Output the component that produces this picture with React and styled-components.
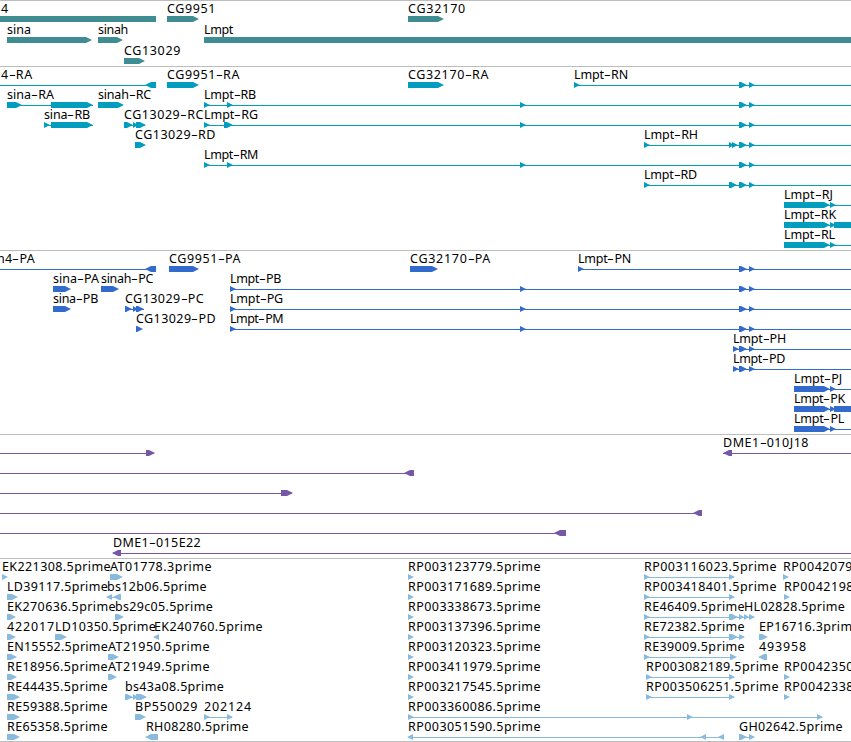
import React from "react";
import styled, { createGlobalStyle } from "styled-components";

const FONT = '12.5px "Noto Sans", "DejaVu Sans", sans-serif';
const VIEW_WIDTH = 851;
const DASH_WIDTH = 7;

// boxes: [start, end, strand], strand 1 = forward, -1 = reverse, 0 = runs past the head
// labels: [text, start, end]
const SHARED_EXONS = [
	[739, 747, 1],
	[749, 755, 1],
];
const LMPT_EXONS = [[520, 526, 1], ...SHARED_EXONS];

const genes = [
	{
		labels: [["4", 1, 9], ["CG9951", 167, 216], ["CG32170", 408, 466]],
		boxes: [[0, 156, 0], [167, 199, 1], [408, 444, 1]],
	},
	{
		labels: [["sina", 7, 31], ["sinah", 98, 128], ["Lmpt", 204, 233]],
		boxes: [[7, 92, 1], [98, 123, 1], [204, 851, 0]],
	},
	{ labels: [["CG13029", 124, 181]], boxes: [[124, 145, 1]] },
];

const transcripts = [
	{
		labels: [["4-RA", 1, 33], ["CG9951-RA", 167, 240], ["CG32170-RA", 408, 489], ["Lmpt-RN", 574, 628]],
		lines: [[0, 156], [574, 851]],
		boxes: [[145, 156, -1], [167, 199, 1], [408, 444, 1], [574, 580, 1], ...SHARED_EXONS],
	},
	{
		labels: [["sina-RA", 7, 54], ["sinah-RC", 98, 151], ["Lmpt-RB", 204, 256]],
		lines: [[7, 93], [204, 851]],
		boxes: [[7, 22, 1], [51, 93, 1], [98, 124, 1], [204, 210, 1], [227, 233, 1], ...LMPT_EXONS],
	},
	{
		labels: [["sina-RB", 44, 90], ["CG13029-RC", 124, 204], ["Lmpt-RG", 204, 258]],
		lines: [[44, 93], [124, 145], [204, 851]],
		boxes: [[44, 50, 1], [51, 93, 1], [124, 133, 1], [133, 138, 1], [136, 146, 1], [204, 210, 1], [224, 233, 1], ...LMPT_EXONS],
	},
	{
		labels: [["CG13029-RD", 135, 216], ["Lmpt-RH", 644, 698]],
		lines: [[644, 851]],
		boxes: [[135, 146, 1], [644, 650, 1], [729, 734, 1], [732, 738, 1], ...SHARED_EXONS],
	},
	{
		labels: [["Lmpt-RM", 204, 258]],
		lines: [[204, 851]],
		boxes: [[204, 210, 1], [227, 233, 1], ...LMPT_EXONS],
	},
	{
		labels: [["Lmpt-RD", 644, 697]],
		lines: [[644, 851]],
		boxes: [[644, 650, 1], [729, 737, 1], ...SHARED_EXONS],
	},
	{
		labels: [["Lmpt-RJ", 784, 833]],
		lines: [[784, 851]],
		boxes: [[784, 830, 1], [830, 836, 1]],
	},
	{
		labels: [["Lmpt-RK", 784, 836]],
		lines: [[784, 851]],
		boxes: [[784, 830, 1], [830, 836, 1], [834, 851, 0]],
	},
	{
		labels: [["Lmpt-RL", 784, 835]],
		lines: [[784, 851]],
		boxes: [[784, 830, 1], [830, 836, 1]],
	},
];

const proteins = [
	{
		labels: [["n4-PA", -3, 35], ["CG9951-PA", 169, 241], ["CG32170-PA", 410, 491], ["Lmpt-PN", 578, 631]],
		lines: [[0, 156], [578, 851]],
		boxes: [[145, 156, -1], [169, 199, 1], [410, 438, 1], [578, 584, 1], ...SHARED_EXONS],
	},
	{
		labels: [["sina-PA", 53, 99], ["sinah-PC", 101, 153], ["Lmpt-PB", 230, 281]],
		lines: [[230, 851]],
		boxes: [[53, 71, 1], [101, 119, 1], [230, 236, 1], ...LMPT_EXONS],
	},
	{
		labels: [["sina-PB", 53, 98], ["CG13029-PC", 125, 204], ["Lmpt-PG", 230, 283]],
		lines: [[125, 144], [230, 851]],
		boxes: [[53, 71, 1], [125, 132, 1], [133, 138, 1], [136, 144, 1], [230, 236, 1], ...LMPT_EXONS],
	},
	{
		labels: [["CG13029-PD", 136, 216], ["Lmpt-PM", 230, 283]],
		lines: [[230, 851]],
		boxes: [[136, 143, 1], [230, 236, 1], ...LMPT_EXONS],
	},
	{
		labels: [["Lmpt-PH", 733, 786]],
		lines: [[733, 851]],
		boxes: [[733, 739, 1], ...SHARED_EXONS],
	},
	{
		labels: [["Lmpt-PD", 733, 785]],
		lines: [[733, 851]],
		boxes: [[733, 739, 1], ...SHARED_EXONS],
	},
	{
		labels: [["Lmpt-PJ", 794, 842]],
		lines: [[794, 851]],
		boxes: [[794, 830, 1], [830, 836, 1]],
	},
	{
		labels: [["Lmpt-PK", 794, 845]],
		lines: [[794, 851]],
		boxes: [[794, 830, 1], [830, 836, 1], [834, 851, 0]],
	},
	{
		labels: [["Lmpt-PL", 794, 844]],
		lines: [[794, 851]],
		boxes: [[794, 830, 1], [830, 836, 1]],
	},
];

const clones = [
	{
		labels: [["DME1-010J18", 723, 809]],
		lines: [[0, 154], [723, 851]],
		boxes: [[146, 155, 1], [723, 732, -1]],
	},
	{ lines: [[0, 414]], boxes: [[404, 414, -1]] },
	{ lines: [[0, 292]], boxes: [[281, 293, 1]] },
	{ lines: [[0, 702]], boxes: [[693, 702, -1]] },
	{ lines: [[0, 566]], boxes: [[554, 566, -1]] },
	{
		labels: [["DME1-015E22", 113, 201]],
		lines: [[113, 851]],
		boxes: [[112, 121, -1]],
	},
];

const ests = [
	{
		labels: [["EK221308.5prime", 2, 111], ["AT01778.3prime", 110, 212], ["RP003123779.5prime", 408, 541], ["RP003116023.5prime", 644, 777], ["RP0042079", 783, 853]],
		lines: [[644, 734]],
		boxes: [[2, 8, 1], [110, 123, 1], [408, 414, 1], [644, 650, 1], [729, 735, 1], [783, 789, 1]],
	},
	{
		labels: [["LD39117.5prime", 7, 108], ["bs12b06.5prime", 107, 207], ["RP003171689.5prime", 408, 541], ["RP003418401.5prime", 644, 777], ["RP0042198", 784, 854]],
		lines: [[107, 121], [644, 734]],
		boxes: [[7, 18, 1], [106, 112, -1], [113, 121, -1], [408, 414, 1], [644, 650, 1], [729, 735, 1], [784, 790, 1]],
	},
	{
		labels: [["EK270636.5prime", 7, 116], ["bs29c05.5prime", 115, 213], ["RP003338673.5prime", 408, 541], ["RE46409.5prime", 644, 745], ["HL02828.5prime", 744, 845]],
		lines: [[644, 754]],
		boxes: [[7, 16, 1], [115, 124, 1], [408, 414, 1], [644, 650, 1], [729, 738, 1], [739, 744, 1], [744, 749, 1], [749, 755, 1]],
	},
	{
		labels: [["422017", 7, 55], ["LD10350.5prime", 55, 156], ["EK240760.5prime", 154, 263], ["RP003137396.5prime", 408, 541], ["RE72382.5prime", 644, 745], ["EP16716.3prime", 759, 860]],
		lines: [[644, 744]],
		boxes: [[7, 16, 1], [55, 67, 1], [153, 159, -1], [408, 414, 1], [644, 650, 1], [729, 738, 1], [739, 745, 1], [759, 768, 1]],
	},
	{
		labels: [["EN15552.5prime", 7, 108], ["AT21950.5prime", 108, 210], ["RP003120323.5prime", 408, 541], ["RE39009.5prime", 644, 745], ["493958", 759, 807]],
		lines: [[644, 735]],
		boxes: [[7, 17, 1], [108, 119, 1], [408, 414, 1], [644, 650, 1], [730, 737, 1], [758, 767, -1]],
	},
	{
		labels: [["RE18956.5prime", 7, 108], ["AT21949.5prime", 108, 210], ["RP003411979.5prime", 408, 541], ["RP003082189.5prime", 646, 779], ["RP0042350", 784, 854]],
		lines: [[646, 734]],
		boxes: [[7, 17, 1], [108, 117, 1], [408, 414, 1], [646, 652, 1], [729, 735, 1], [784, 790, 1]],
	},
	{
		labels: [["RE44435.5prime", 7, 108], ["bs43a08.5prime", 125, 224], ["RP003217545.5prime", 408, 541], ["RP003506251.5prime", 646, 779], ["RP0042338", 784, 854]],
		lines: [[125, 146], [646, 734]],
		boxes: [[7, 20, 1], [125, 133, 1], [133, 138, 1], [136, 147, 1], [408, 414, 1], [646, 652, 1], [729, 735, 1], [784, 790, 1]],
	},
	{
		labels: [["RE59388.5prime", 7, 108], ["BP550029", 135, 198], ["202124", 204, 252], ["RP003360086.5prime", 408, 541]],
		lines: [[204, 232], [408, 822]],
		boxes: [[7, 20, 1], [135, 146, 1], [204, 210, 1], [227, 233, 1], [408, 414, 1], [687, 693, 1], [817, 823, 1]],
	},
	{
		labels: [["RE65358.5prime", 7, 108], ["RH08280.5prime", 146, 249], ["RP003051590.5prime", 408, 541], ["GH02642.5prime", 739, 843]],
		lines: [[408, 724], [739, 754]],
		boxes: [[7, 20, 1], [145, 158, -1], [407, 413, -1], [700, 706, -1], [718, 724, -1], [739, 747, 1], [749, 755, 1]],
	},
];

const tracks = [
	{ name: "genes", color: "#3f8d93", rowHeight: 21, height: 65, rows: genes },
	{ name: "transcripts", color: "#009dbf", rowHeight: 20, height: 183, rows: transcripts },
	{ name: "proteins", color: "#326bcb", rowHeight: 20, height: 183, rows: proteins },
	{ name: "clones", color: "#7557a6", rowHeight: 20, height: 123, rows: clones },
	{ name: "ests", color: "#88bbdd", rowHeight: 20, height: 182, rows: ests },
];

const ruler = document.createElement("canvas").getContext("2d");

// spread the letters so that a label covers its span, the dash keeps its own width
function tracking(text, width) {
	const letters = text.replace("-", "");
	const dash = letters === text ? 0 : DASH_WIDTH;
	ruler.font = FONT;
	return (width - dash - ruler.measureText(letters).width) / letters.length;
}

function boxPoints([start, end, strand]) {
	const head = Math.min(6, end - start);
	if (strand === 1) {
		return `${start},0 ${end - head},0 ${end},3 ${end - head},6 ${start},6`;
	}
	if (strand === -1) {
		return `${end},0 ${start + head},0 ${start},3 ${start + head},6 ${end},6`;
	}
	return `${start},0 ${end},0 ${end},6 ${start},6`;
}

function FeatureRow({ row, color, height }) {
	const { labels = [], lines = [], boxes = [] } = row;
	return (
		<Row height={height}>
			<Labels>
				{labels.map(([text, start, end]) => {
					const [name, suffix] = text.split("-");
					return (
						<Label
							key={text}
							style={{
								left: start,
								letterSpacing: `${tracking(text, end - start)}px`,
							}}
						>
							{name}
							{suffix && <Dash>-</Dash>}
							{suffix}
						</Label>
					);
				})}
			</Labels>
			<Glyphs color={color} viewBox={`0 0 ${VIEW_WIDTH} 6`}>
				{lines.map(([start, end]) => (
					<rect key={start} x={start} y="3" width={end - start} height="1" />
				))}
				{boxes.map((box) => (
					<polygon key={box[0]} points={boxPoints(box)} />
				))}
			</Glyphs>
		</Row>
	);
}

export default function App() {
	return (
		<>
			<GlobalStyle />
			<Browser>
				{tracks.map((track) => (
					<Track key={track.name} height={track.height}>
						{track.rows.map((row, i) => (
							<FeatureRow
								key={i}
								row={row}
								color={track.color}
								height={track.rowHeight}
							/>
						))}
					</Track>
				))}
			</Browser>
		</>
	);
}

const GlobalStyle = createGlobalStyle`
	body {
		margin: 0;
		background: #ffffff;
	}
`;

const Browser = styled.main`
	display: flex;
	flex-direction: column;
	width: ${VIEW_WIDTH}px;
	height: 742px;
	box-sizing: border-box;
	overflow: hidden;
	border-bottom: 1px solid #bdbdbd;
`;

const Track = styled.section`
	display: flex;
	flex-direction: column;
	flex: none;
	height: ${(props) => props.height}px;
	border-top: 1px solid #bdbdbd;
`;

const Row = styled.div`
	display: flex;
	flex-direction: column;
	flex: none;
	height: ${(props) => props.height}px;
`;

const Labels = styled.div`
	position: relative;
	flex: none;
	height: 15px;
`;

const Label = styled.span`
	position: absolute;
	top: 0;
	font: ${FONT};
	line-height: 16px;
	color: #000000;
	white-space: pre;
`;

const Dash = styled.span`
	display: inline-block;
	width: ${DASH_WIDTH}px;
	letter-spacing: 0;
	text-align: center;
	transform: scaleX(1.7);
`;

const Glyphs = styled.svg`
	display: block;
	flex: none;
	width: ${VIEW_WIDTH}px;
	height: 6px;
	fill: ${(props) => props.color};
`;
